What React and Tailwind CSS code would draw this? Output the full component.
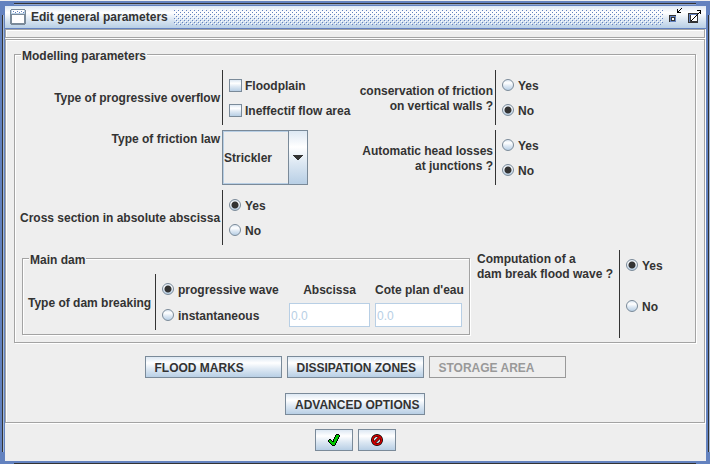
import React from "react";

const control =
  "bg-[linear-gradient(#dde8f3,#ffffff_30%,#dde8f3_60%,#b8cfe5)]";
const etched =
  "border border-[#a3a3a3] shadow-[1px_1px_0_#fff,inset_1px_1px_0_#fff]";

function Radio({ name, label, checked }) {
  return (
    <label className="flex h-[25px] items-start gap-1 pt-1.5 whitespace-nowrap">
      <input
        type="radio"
        name={name}
        defaultChecked={checked}
        className="size-3 shrink-0 appearance-none rounded-full border border-[#7a8a99] bg-[linear-gradient(#dde8f3,#ffffff_30%,#dde8f3_60%,#b8cfe5)] checked:bg-[radial-gradient(circle,#333_3px,transparent_4px),linear-gradient(#dde8f3,#ffffff_30%,#dde8f3_60%,#b8cfe5)]"
      />
      {label}
    </label>
  );
}

function Check({ label }) {
  return (
    <label className="flex h-[25px] items-start gap-[3px] pt-1.5 whitespace-nowrap">
      <input
        type="checkbox"
        className={`size-[13px] shrink-0 appearance-none border border-[#7a8a99] ${control}`}
      />
      {label}
    </label>
  );
}

function Options({ label, children }) {
  return (
    <div
      role="group"
      aria-label={label}
      className="h-[55px] border-l border-[#333] pt-[3px] pl-1.5"
    >
      {children}
    </div>
  );
}

function RowLabel({ children }) {
  return (
    <div className="self-center pt-0.5 pr-0.5 text-right whitespace-nowrap">
      {children}
    </div>
  );
}

function Legend({ children }) {
  return (
    <legend className="ml-1.5 bg-[#eeeeee] px-px pt-1">{children}</legend>
  );
}

function Button({ children, className = "", ...rest }) {
  return (
    <button
      type="button"
      className={`flex h-[22px] items-center border border-[#7a8a99] px-[9px] whitespace-nowrap disabled:border-[#999] disabled:bg-none disabled:text-[#999] ${control} ${className}`}
      {...rest}
    >
      {children}
    </button>
  );
}

function TitleBar() {
  return (
    <header
      className={`flex h-[23px] items-center border-b border-[#6382bf] pl-[5px] ${control}`}
    >
      <svg width="16" height="16" className="shrink-0" shapeRendering="crispEdges">
        <path fill="#7a8a99" d="M1 0h14v1h1v14h-1v1H1v-1H0V1h1z" />
        <path fill="#b8cfe5" d="M1 1h14v4H1z" />
        <path fill="#fff" d="M2 1h12v3H2zM2 6h12v8H2z" />
        <path fill="#6382bf" d="M3 2h1v1H3zM5 3h1v1H5zM7 2h1v1H7zM9 3h1v1H9zM11 2h1v1h-1zM13 3h1v1h-1z" />
      </svg>
      <h1 className="mr-1.5 ml-[5px] pt-px whitespace-nowrap">Edit general parameters</h1>
      <svg height="16" className="min-w-0 flex-1" shapeRendering="crispEdges">
        <defs>
          <pattern id="bumps" width="4" height="4" patternUnits="userSpaceOnUse">
            <path fill="#6382bf" d="M0 1h1v1H0zM2 3h1v1H2z" />
            <path fill="#fff" d="M3 0h1v1H3zM1 2h1v1H1z" />
          </pattern>
        </defs>
        <rect width="100%" height="16" fill="url(#bumps)" />
      </svg>
      <button type="button" aria-label="Minimize" className="mr-[5px] ml-1.5">
        <svg width="14" height="18" shapeRendering="crispEdges">
          <path fill="#333" d="M0 7h7v7H0z" />
          <path fill="#6382bf" d="M1 8h6v6H1z" />
          <path fill="#333" d="M2 9h4v4H2z" />
          <path fill="#fff" d="M3 10h2v2H3z" />
          <path fill="#000" d="M8 1h1v3h3v1H8zM9 3h1v1H9zM10 2h1v1h-1zM11 1h1v1h-1zM12 0h1v1h-1z" />
        </svg>
      </button>
      <button type="button" aria-label="Maximize" className="mr-1">
        <svg width="14" height="18" shapeRendering="crispEdges">
          <path fill="#333" d="M0 5h10v10H0z" />
          <path fill="#6382bf" d="M1 6h8v8H1z" />
          <path fill="#333" d="M2 7h7v7H2z" />
          <path fill="#fff" d="M3 7h6v6H3z" />
          <path fill="#000" d="M3 12h1v1H3zM4 11h1v1H4zM5 10h1v1H5zM6 9h1v1H6zM7 8h1v1H7zM8 7h1v1H8zM9 6h1v1H9zM10 5h1v1h-1zM11 4h1v1h-1zM9 2h4v4h-1V3H9z" />
        </svg>
      </button>
    </header>
  );
}

function MainDam() {
  return (
    <fieldset className={`-mt-px ml-0.5 w-[448px] pb-1 ${etched}`}>
      <Legend>Main dam</Legend>
      <div className="flex pt-1.5 pl-[5px]">
        <div className="flex w-[127px] items-center pt-0.5 whitespace-nowrap">
          Type of dam breaking
        </div>
        <div className="grid grid-cols-[122px_81px_87px] grid-rows-[26px_26px] items-start gap-x-[5px] border-l border-[#333] pt-[3px] pb-px pl-1.5">
          <Radio name="breaking" label="progressive wave" checked />
          <label htmlFor="abscissa" className="pt-1.5 text-center">
            Abscissa
          </label>
          <label htmlFor="cote" className="pt-1.5 text-center whitespace-nowrap">
            Cote plan d'eau
          </label>
          <Radio name="breaking" label="instantaneous" />
          <input
            id="abscissa"
            disabled
            defaultValue="0.0"
            className="h-6 w-full min-w-0 border border-[#b8cfe5] bg-white px-px pt-0.5 font-normal text-[#b8cfe5]"
          />
          <input
            id="cote"
            disabled
            defaultValue="0.0"
            className="h-6 w-full min-w-0 border border-[#b8cfe5] bg-white px-px pt-0.5 font-normal text-[#b8cfe5]"
          />
        </div>
      </div>
    </fieldset>
  );
}

function Parameters() {
  return (
    <fieldset className={`min-w-0 pb-1 ${etched}`}>
      <Legend>Modelling parameters</Legend>
      <div className="flex flex-col gap-[5px] px-[5px] pt-1.5">
        <div className="grid grid-cols-[202px_134px_139px_1fr] gap-y-[5px]">
          <RowLabel>Type of progressive overflow</RowLabel>
          <Options label="Type of progressive overflow">
            <Check label="Floodplain" />
            <Check label="Ineffectif flow area" />
          </Options>
          <RowLabel>
            conservation of friction
            <br />
            on vertical walls ?
          </RowLabel>
          <Options label="Conservation of friction on vertical walls">
            <Radio name="friction" label="Yes" />
            <Radio name="friction" label="No" checked />
          </Options>

          <label htmlFor="law" className="pt-0.5 pr-0.5 text-right">
            Type of friction law
          </label>
          <div className="relative h-[55px] w-[86px]">
            <select
              id="law"
              className="size-full appearance-none border border-[#7a8a99] bg-[#eeeeee] pt-0.5 pl-px shadow-[inset_0_0_0_1px_#b8cfe5]"
            >
              <option>Strickler</option>
            </select>
            <div
              className={`pointer-events-none absolute inset-y-0 right-0 flex w-5 items-center justify-center border border-[#7a8a99] ${control}`}
            >
              <svg width="10" height="5" shapeRendering="crispEdges">
                <path fill="#333" d="M0 0h10v1H9v1H8v1H7v1H6v1H4V4H3V3H2V2H1V1H0z" />
              </svg>
            </div>
          </div>
          <RowLabel>
            Automatic head losses
            <br />
            at junctions ?
          </RowLabel>
          <Options label="Automatic head losses at junctions">
            <Radio name="losses" label="Yes" />
            <Radio name="losses" label="No" checked />
          </Options>

          <RowLabel>Cross section in absolute abscissa</RowLabel>
          <Options label="Cross section in absolute abscissa">
            <Radio name="section" label="Yes" checked />
            <Radio name="section" label="No" />
          </Options>
        </div>

        <div className="flex items-start">
          <MainDam />
          <div className="ml-[7px] w-[142px] pt-0.5 whitespace-nowrap">
            Computation of a
            <br />
            dam break flood wave ?
          </div>
          <div
            role="group"
            aria-label="Computation of a dam break flood wave"
            className="flex h-[88px] flex-1 flex-col gap-4 border-l border-[#333] pt-[3px] pl-1.5"
          >
            <Radio name="wave" label="Yes" checked />
            <Radio name="wave" label="No" />
          </div>
        </div>
      </div>
    </fieldset>
  );
}

export default function App() {
  return (
    <div className="flex min-h-screen flex-col bg-[#6382bf] font-['Liberation_Sans',Arial,sans-serif] text-[12px] leading-[15px] font-bold text-[#333]">
      <div className="h-1.5 shrink-0 border-t border-[#eeeeee] px-3.5 pt-0.5">
        <div className="h-0.5 border-t border-[#333] bg-[#8fa5cd]" />
      </div>
      <div className="flex flex-1">
        <div className="w-[5px] shrink-0 pt-[9px] pb-[9px] pl-0.5">
          <div className="h-full w-0.5 border-l border-[#333] bg-[#a3b8d8]" />
        </div>
        <div className="flex min-w-0 flex-1 flex-col bg-[#eeeeee]">
          <TitleBar />
          <div className={`mr-px mb-px h-[9px] ${etched}`} />
          <main className={`mr-px flex flex-1 flex-col px-2 pt-[5px] pb-[7px] ${etched}`}>
            <Parameters />
            <div className="mt-[13px] flex justify-center gap-[5px]">
              <Button className="w-[137px] pt-0.5">FLOOD MARKS</Button>
              <Button className="w-[137px] pt-0.5">DISSIPATION ZONES</Button>
              <Button className="w-[137px] pt-0.5" disabled>
                STORAGE AREA
              </Button>
            </div>
            <div className="mt-[15px] flex justify-center">
              <Button className="w-[140px] pt-0.5">ADVANCED OPTIONS</Button>
            </div>
          </main>
          <footer className="flex justify-center gap-[5px] pt-1.5 pb-2.5">
            <Button className="w-[38px] justify-center" aria-label="OK">
              <svg width="12" height="12" className="shrink-0" shapeRendering="crispEdges">
                <path
                  fill="#000"
                  d="M8 0h3v1h1v2h-1v2h-1v2H9v2H8v2H7v1H4v-1H3v-1H2V9H1V8H0V6h1V5h2v1h1v1h1V5h1V3h1V1h1z"
                />
                <path
                  fill="#00c800"
                  d="M8 1h3v2h-1v2H9v2H8v2H7v2H4v-1H3V9H2V8H1V6h2v1h1v1h2V5h1V3h1z"
                />
              </svg>
            </Button>
            <Button className="w-[38px] justify-center" aria-label="Cancel">
              <svg width="12" height="12" className="shrink-0">
                <circle cx="6" cy="6" r="4.5" fill="none" stroke="#000" strokeWidth="3" />
                <path d="M3 9L9 3" stroke="#000" strokeWidth="3" />
                <circle cx="6" cy="6" r="4.4" fill="none" stroke="#d00000" strokeWidth="1.8" />
                <path d="M3 9L9 3" stroke="#d00000" strokeWidth="1.8" />
              </svg>
            </Button>
          </footer>
        </div>
        <div className="w-1 shrink-0 pt-[9px] pb-[9px] pl-0.5">
          <div className="h-full w-0.5 border-l border-[#333] bg-[#a3b8d8]" />
        </div>
      </div>
      <div className="h-[3px] shrink-0 px-3.5 pt-0.5">
        <div className="h-px bg-[#333]" />
      </div>
    </div>
  );
}
